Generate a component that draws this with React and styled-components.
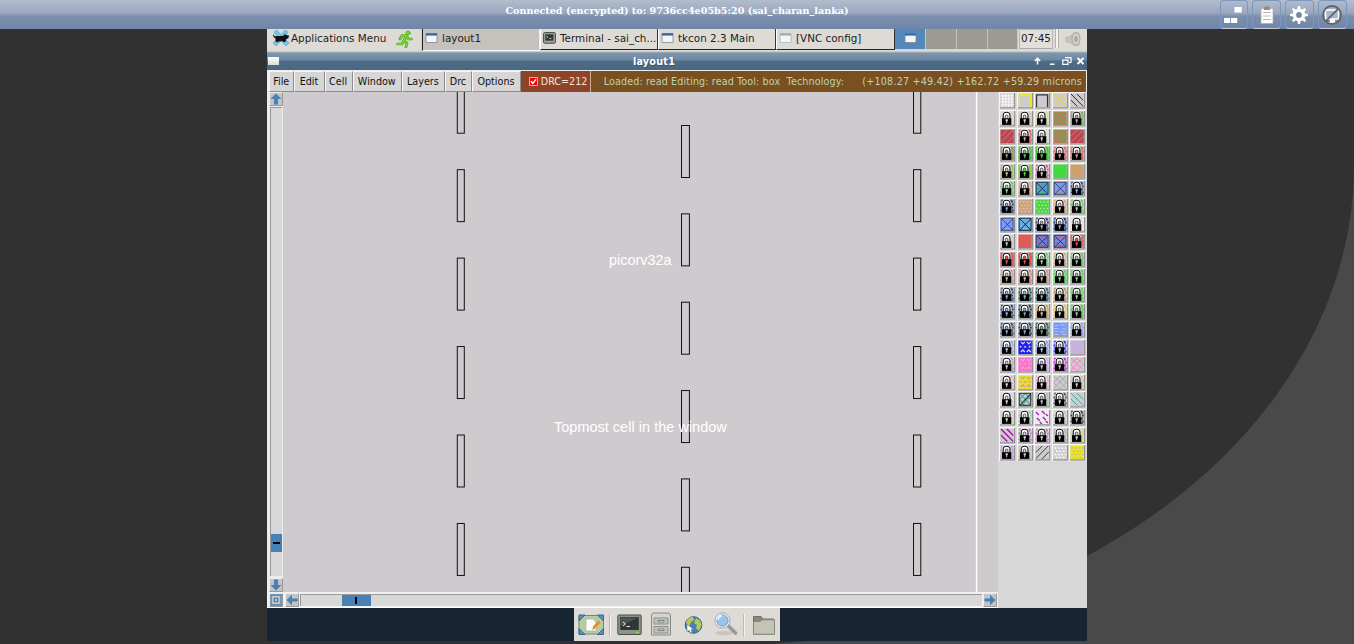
import React from "react";
import styled, { createGlobalStyle } from "styled-components";

const Global = createGlobalStyle`
  * { box-sizing: border-box; }
  html, body { margin: 0; height: 100%; overflow: hidden; background: #494949; }
  body { font-family: "DejaVu Sans", sans-serif; font-size: 10.4px; color: #1c1c1c; }
  svg { display: block; flex: none; }
`;

const Page = styled.div`
  width: 1354px; height: 644px; display: flex; flex-direction: column; overflow: hidden; background: #494949;
`;
const Banner = styled.header`
  height: 28.8px; flex: none; display: grid; grid-template-columns: 1fr auto 1fr; align-items: start;
  background: linear-gradient(#b2bdcd 0%, #99a7be 45%, #7b8fae 56%, #7086a8 100%);
`;
const BannerText = styled.div`
  grid-column: 2; padding-top: 4px; color: #fff; white-space: pre;
  font: bold 9.6px/13px "DejaVu Serif", serif;
`;
const BannerButtons = styled.div`
  display: flex; justify-content: flex-end; gap: 4px; padding-right: 7.5px;
`;
const BannerButton = styled.div`
  width: 28.7px; height: 28.8px; border: 1px solid #7d97c0; border-radius: 4px; border-bottom-color: #c4cdda;
  display: flex; align-items: center; justify-content: center; padding-top: 1px;
`;
const Screen = styled.main`
  width: 1354px; height: 617px; flex: none; background: #313131; border-bottom-right-radius: 640px 480px;
  display: flex; justify-content: center; align-items: flex-start;
`;
const Desktop = styled.div`
  width: 820px; height: 612.2px; background: #172434; display: flex; flex-direction: column; align-items: center;
`;

const Panel = styled.div`
  width: 100%; height: 22.2px; flex: none; display: flex; background: #dedbd6; white-space: pre; line-height: 18px;
`;
const AppMenu = styled.div`
  width: 129px; display: flex; align-items: center; gap: 1px; padding-left: 5px; height: 19px;
`;
const Runner = styled.div`width: 26px; padding-top: 1px; border-right: 1px solid #cfccc7;`;
const Task = styled.div`
  width: ${(p) => p.$w}px; height: ${(p) => (p.$active ? 22 : 21)}px; display: flex; align-items: center; gap: 4px; padding: 0 0 2px 2px;
  background: ${(p) => (p.$active ? "#c5c1bc" : "#dedbd6")};
  border-left: 1px solid ${(p) => (p.$active ? "#222" : "#fff")};
  border-bottom: 1px solid ${(p) => (p.$active ? "#f8f8f8" : "#222")};
  border-right: 1px solid ${(p) => (p.$active ? "#eee" : "#333")};
`;
const Workspace = styled.div`
  width: ${(p) => p.$w}px; height: 21px; display: flex; align-items: center; justify-content: center; padding-bottom: 2px;
  background: ${(p) => (p.$on ? "#5588ba" : "#9c9a93")}; border-right: 1px solid #c9c6c1; border-bottom: 1px solid #d7d4cf;
`;
const Clock = styled.div`
  width: 34px; height: 20px; margin-left: 1px; padding-left: 1px; border: 1px solid #bbb8b3; border-bottom-color: #aaa;
  line-height: 17px; background: #e2dfda;
`;
const Grip = styled.div`width: 4px; height: 19px; margin-left: 2px; border: solid #b5b2ad; border-width: 0 1px; background: #f4f2ef;`;
const Tray = styled.div`flex: 1; display: flex; justify-content: flex-end; padding: 1px 5px 0 0;`;

const TitleBar = styled.div`
  width: 100%; height: 18.6px; flex: none; display: grid; grid-template-columns: 1fr auto 1fr; align-items: center;
  background: linear-gradient(#dcdcd8 0, #7f96ae 2px, #6d87a2 9px, #4e6d88 10px, #496781 100%);
  color: #fff;
`;
const TitleMark = styled.div`width: 11px; height: 8px; margin: 2px 0 0 1px; background: linear-gradient(#fff, #dcdcd6);`;
const Title = styled.div`
  font: bold 9.7px/14px "DejaVu Sans", sans-serif; letter-spacing: 0.2px; text-shadow: 1px 1px 0 #3a536b;
  padding-top: 3px; margin-right: 46px;
`;
const TitleActions = styled.div`display: flex; justify-content: flex-end; padding: 2px 2.5px 0 0;`;

const MenuBar = styled.div`
  width: 100%; height: 22.4px; flex: none; display: flex; padding: 1px 1px 0 2px; background: #ededed;
  font-size: 9.6px; line-height: 21px; white-space: pre;
`;
const MenuItem = styled.div`
  width: ${(p) => p.$w}px; height: 21px; text-align: center; background: #d6d6d6; color: #111;
  border: 1px solid #f5f5f5; border-right: 1.5px solid #8d8d8d; border-bottom-color: #8d8d8d; line-height: 19.5px;
  text-indent: -1px;
`;
const Drc = styled.div`
  width: 70px; display: flex; align-items: center; gap: 3px; padding-left: 8px; background: #8d4429; color: #f0e4da;
  border-right: 1px solid #c9b19c;
`;
const Status = styled.div`
  flex: 1; display: flex; justify-content: space-between; padding: 0 4px 0 13px; background: #7a5020; color: #bfd0b2;
`;
const StatusText = styled.span`letter-spacing: ${(p) => p.$track}px;`;

const Body = styled.div`width: 100%; height: 516px; flex: none; display: flex; background: #d7d7d7;`;
const Editor = styled.div`width: 731px; display: flex; flex-direction: column;`;
const EditorTop = styled.div`height: 500px; display: flex;`;
const VScroll = styled.div`
  width: 16px; display: flex; flex-direction: column; align-items: center; padding: 0.5px 0 0 2px; background: #ececec;
`;
const HScroll = styled.div`
  height: 16px; display: flex; align-items: center; padding: 1px 0 0 1.5px; background: #f1f1f1; border-bottom: 1px solid #fff;
`;
const Arrow = styled.div`
  width: 14px; height: 14px; flex: none; background: #c4c4c4; border: 1px solid #ededed;
  border-right-color: #999; border-bottom-color: #999; margin: ${(p) => p.$m || "0"};
`;
const VTrough = styled.div`
  width: 12px; flex: 1; margin-top: 1px; background: #d8d8d8; border: solid #999; border-width: 1px 0 0 1px; padding-top: 425.5px;
  margin-bottom: 2px;
`;
const VThumb = styled.div`
  height: 18px; background: #4682b4; display: flex; align-items: center; justify-content: center;
`;
const HTrough = styled.div`
  height: 12.6px; flex: 1; background: #d8d8d8; border: solid #999; border-width: 1px 0 0 1px; padding-left: 41px;
  margin-right: 1px;
`;
const HThumb = styled.div`
  width: 29px; height: 11px; background: #4682b4; display: flex; align-items: center; justify-content: center;
`;
const ThumbMark = styled.i`background: #000; width: ${(p) => p.$w}px; height: ${(p) => p.$h}px;`;
const Palette = styled.div`
  width: 89px; padding: 0.4px 0 0 1px; display: grid; grid-template-columns: repeat(5, 17.6px); grid-auto-rows: 17.6px; align-content: start;
  background: #d7d7d7;
`;
const Dock = styled.div`
  width: 206px; height: 33px; background: #dedbd6; display: flex; align-items: center; padding: 1px 0 0 4px;
`;
const DockIcon = styled.div`width: 26px; margin-left: ${(p) => p.$gap}px; display: flex; justify-content: center;`;
const DockLine = styled.i`width: 2px; height: 22px; margin-left: ${(p) => p.$gap}px; background: #bdb9b4; border-right: 1px solid #f5f3ef;`;

const BG = "#cfcace";
const N = "none";
/* Each entry is [kind, base colour, ink colour]; the kind "lock" is a locked layer over a speckled fill. */
const L = (base, ink = base) => ["lock", base, ink];
const tan = "#cda17c", grn = "#42d83e", red = "#df5b5b", blu = "#7899ff", pink = "#ff6fd0", lav = "#c3afdc";
const layers = [
  ["grid", BG, "#fff"], ["frame", BG, "#f3ee10"], ["frame", BG, "#333"], ["back", BG, "#ddd94b"], ["back", BG, "#222"],
  L("#ddd", "#e7c9b0"), L("#d8d0cf", "#d9bda9"), L("#ddd", "#dfdf62"), ["back", "#b17e60", "#70a845"], L("#c2aaa0", "#56bd54"),
  ["slash", "#bd4450", "#d0807a"], L("#d8aaaa", "#dc555b"), L("#ddd", "#ddd"), ["cross", "#b17e60", "#70a845"], ["slash", "#bd4450", "#d0807a"],
  L("#a69a79", "#62a744"), L("#69c662", "#27d62b"), L("#55d64e", "#45ae40"), L("#dfa5aa", "#cf5965"), L("#e39d8a", "#cf5945"),
  L("#d5c3a2", "#6ccb42"), L("#58da45", "#c0c638"), L("#dfcad0", "#b94a7d"), ["solid", grn, grn], ["solid", "#cda170", "#cda170"],
  L("#a9d3a6", "#57cf53"), L("#ddc9b8", tan), ["box", "#5a94e0", "#35c94c", "#1d3442"], ["box", blu, "#b89988", "#344057"], L("#9db6f2", "#263353"),
  L("#8da6d3", "#202d49"), ["dots", tan, "#d5c5b8"], ["dots", grn, "#b9d8b2"], L("#e0caba", "#d0a174"), L("#bbdbb8", "#33d62d"),
  ["box", blu, "#9faac3", "#2f4569"], ["box", "#70a8ee", "#65cfaa", "#10171c"], L("#a9b4d3", "#1c263c"), L("#8faaea", "#172034"), L("#eee", "#ddd"),
  L("#d0d0d0", "#d0d0d0"), ["solid", red, red], ["box", "#6384dc", "#d9485e", "#303052"], ["box", "#6e8de8", "#dc4a4c", "#303248"], L(red, "#df8a83"),
  L(red, "#ed5553"), L(red, "#ed4440"), L("#b1dbad", "#51ca4e"), L("#e1cfc2", tan), L("#a6d2a1", "#4fc44b"),
  L("#d6c1b0", "#c49b77"), L("#dfb8b8", "#da7373"), L("#d0bcac", "#b99a80"), L("#91dd8b", "#4bcf47"), L("#9bd897", "#46c842"),
  L("#9daed4", "#27395d"), L("#93bab2", "#173a34"), L("#99b2be", "#1e4c46"), L("#dfcfc2", "#a98059"), L("#a0dc9b", "#4bcc47"),
  L("#93b1e8", "#1b2842"), L("#7fa0b8", "#122b2a"), L("#d6c3a8", "#cf9d43"), L("#e7dcb8", "#e1ba51"), L("#99d795", "#40c33c"),
  L("#92a8cc", "#263955"), L("#92a8c7", "#172438"), L("#83a598", "#234742"), ["wave", blu, "#b9c3e0"], L("#b9c7e8", blu),
  L("#c5d0ea", "#7fa1ee"), ["weave", "#1d1def", "#d8d4f6"], L("#bacbf0", "#7396ee"), L("#bfc3ff", "#1515eb"), ["solid", "#c6b2dd", lav],
  L("#d8cdd9", "#b698ac"), ["weave", pink, "#d9b0c8"], L("#d4c7e2", lav), L("#e0b6ea", "#aa17c7"), ["cross", BG, "#ff75cb"],
  L("#e5d7da", "#e9a4b6"), ["weave", "#e8df2f", "#d794b0"], L("#e7d7dc", "#e4a3bc"), ["cross", BG, "#a8a8a8"], L("#d9d3cf", "#d7b69c"),
  L("#ddd", "#d4d4d4"), ["xframe", BG, "#47aaa4"], L("#c8c8c8", "#b2b2b2"), L("#d1d1d1", "#333"), ["back", BG, "#36aaa2"],
  L("#ddd9d6", "#dec5af"), L("#dedede", "#6ec8bd"), ["dash", "#f2edf2", "#aa25bb"], L("#ddd", "#bbb"), L("#bbb", "#222"),
  ["bold", BG, "#b314c2"], L("#ddd2df", "#b85bbe"), L("#ddd2df", "#b85bbe"), L("#ccc", "#aaa"), L("#d7d6cd", "#dfdd45"),
  L("#d1bddd", "#b898de"), L("#d3cfd3", "#bbb"), ["slash", BG, "#333"], ["dots", "#cfcccf", "#fff"], ["dots", "#ece61c", "#c0bcae"],
];

const SPECKS = [[3, 2], [13, 3], [2, 6], [14, 6], [3, 9], [13, 9], [2, 12], [14, 12], [13, 14], [12, 2]];

function Swatch({ kind, base, ink, line }) {
  const lines = {
    back: "M2 2 14.5 14.5M8 2 14.5 8.5M2 8 8.5 14.5",
    bold: "M2 2 14.5 14.5M8 2 14.5 8.5M2 8 8.5 14.5",
    slash: "M2 14.5 14.5 2M8 15 15 8M2 8.5 8.5 2",
    cross: "M2 9 8 15M2 2 14 14M8 2 15 9M2 8 8 2M2 14 14 2M8 15 15 8",
    dash: "M2 3l3 3M8 2l3 3M12 5l2 2M3 9l3 3M9 8l3 3M6 13l2 2M12 12l2 2",
    wave: "M3 4.5h3M8 4h5M2 7.5h5M10 8h4M3 10.5h3M8 11h5M2 13.5h5M10 13.5h4",
    weave: "M4 3l2 2 2-2M10 3l2 2 2-2M3 7l1.5 1.5M7 8h2.5M12 8.5 13.5 7M4 13l2-2 2 2M10 13l2-2 2 2",
  };
  const widths = { bold: 1.5, dash: 1.5, weave: 1.3, wave: 1 };
  return (
    <svg width="17.6" height="17.6" viewBox="0 0 17.6 17.6">
      <path d="M0 0H17.6V17.6H0z" fill="#dcdcdc" />
      <path d="M.4 17V.6H16.5" fill={N} stroke="#f7f7f7" strokeWidth="1.3" />
      <path d="M1 15.9H15.6V1" fill={N} stroke="#929292" strokeWidth="1.2" />
      <svg x="1.4" y="1.4" width="13.4" height="13.6" viewBox="1.5 1.5 13.5 13.5" preserveAspectRatio="none">
        <path d="M1 1H16V16H1z" fill={base} />
        {lines[kind] && <path d={lines[kind]} fill={N} stroke={ink} strokeWidth={widths[kind] || 0.95} />}
        {kind === "grid" && <path d="M2 4H15M2 7H15M2 10H15M2 13H15M4 2V15M7 2V15M10 2V15M13 2V15" stroke={ink} strokeWidth=".9" />}
        {kind === "frame" && <path d="M2.6 15V3H13.8V15" fill={N} stroke={ink} strokeWidth="1.4" />}
        {kind === "dots" && <path d="M2.5 4H15M4 7.3H15M2.5 10.6H15M4 13.6H15" stroke={ink} strokeWidth="1.5" strokeDasharray="1.8 1.7" />}
        {kind === "xframe" && <path d="M2 9 9 2M5 14 14 5M3 3 14 14M8 2 15 9M2 8 8 15" fill={N} stroke={ink} strokeWidth="1.2" />}
        {kind === "xframe" && <path d="M2.3 2.3H14V14.3H2.3zM3 14 14 3" fill={N} stroke="#222" strokeWidth="1" />}
        {kind === "box" && <path d="M5 3h7M3 6h3M11 6h3M4 10h2M11 10h3M6 13h5" stroke={ink} strokeWidth="1.3" />}
        {kind === "box" && <path d="M2.2 2.3H14.3V14.3H2.2zM3 3 14 14M14 3 3 14" fill={N} stroke={line} strokeWidth="0.9" />}
        {kind === "lock" && SPECKS.map(([x, y]) => <path key={`${x}-${y}`} d={`M${x - 0.5} ${y - 0.5}h1.4v2h-1.4z`} fill={ink} />)}
      </svg>
      {kind === "lock" && (
        <g>
          <path d="M3.6 8V5.1Q3.6 1.7 7.6 1.7T11.6 5.1V8" fill={N} stroke="#f4f4f4" strokeWidth="1.2" />
          <path d="M4.2 8.6V5.3Q4.2 2.3 7.6 2.3T11 5.3V8.6" fill="#fff" stroke="#111" strokeWidth="1.15" />
          <path d="M6.3 8.6V6.2Q6.3 5 7.6 5T8.9 6.2V8.6" fill={base} stroke="#222" strokeWidth=".7" />
          <path d="M3 8.2H12.3V14.9H3z" fill="#000" />
          <path d="M6.6 9.2H8.8V11.3H8.2V13.2H7.2V11.3H6.6z" fill={base} />
        </g>
      )}
    </svg>
  );
}

const WindowIcon = ({ pale }) => (
  <svg width="13" height="12" viewBox="0 0 13 12">
    <path d="M1 1.5H12V10.5H1z" fill="#f5f5f2" stroke={pale ? "#aab3bd" : "#7c8797"} strokeWidth=".8" />
    <path d="M1 1.2H12V3.6H1z" fill={pale ? "#9aafc8" : "#3c67a8"} />
  </svg>
);
const TerminalMini = () => (
  <svg width="13" height="12" viewBox="0 0 13 12">
    <rect x=".6" y=".6" width="11.8" height="10.6" rx="1" fill="#a3a8a2" stroke="#454a46" />
    <path d="M2.3 2.3H10.5V8.7H2.3z" fill="#303934" />
    <path d="M3.5 4 5 5 3.5 6M6 6.5H8.5" stroke="#b8c5bb" fill={N} strokeWidth=".8" />
  </svg>
);
const ARROWS = {
  up: "M6 .5 11.5 6H8V11.5H4V6H.5z",
  down: "M6 11.5 .5 6H4V.5H8V6H11.5z",
  left: "M.5 6 6 .8V4.6H11.5V7.4H6V11.2z",
  right: "M11.5 6 6 .8V4.6H.5V7.4H6V11.2z",
};
const ArrowGlyph = ({ dir }) => (
  <svg width="12" height="12" viewBox="0 0 12 12"><path d={ARROWS[dir]} fill="#4682b4" /></svg>
);

const cellRects = [];
for (let i = 0; i < 6; i++) {
  cellRects.push([174.4, -10.8 + i * 88.45, 7], [630.6, -10.8 + i * 88.45, 7.3], [398.6, 33.5 + i * 88.35, 7.9]);
}

function LayoutCanvas() {
  return (
    <svg width="715" height="500" viewBox="0 0 715 500">
      <path d="M0 0H715V500H0z" fill="#cfcace" />
      {cellRects.map(([x, y, w], i) => (
        <rect key={i} x={x - 0.1} y={y} width={w} height="52" fill={N} stroke="#111" strokeWidth="1" />
      ))}
      <path d="M693.6 0V500" stroke="#fff" strokeWidth="1.5" />
      <g fill="#fff" fontFamily="'Liberation Sans', sans-serif" fontSize="14.4">
        <text x="326" y="173">picorv32a</text>
        <text x="271" y="340" letterSpacing="0.06">Topmost cell in the window</text>
      </g>
    </svg>
  );
}

const menus = [["File", 25.4], ["Edit", 30.2], ["Cell", 28], ["Window", 49.4], ["Layers", 42.8], ["Drc", 27.4], ["Options", 48.6]];

export default function App() {
  return (
    <>
      <Global />
      <Page>
        <Banner>
          <BannerText>Connected (encrypted) to: 9736cc4e05b5:20 (sai_charan_lanka)</BannerText>
          <BannerButtons>
            <BannerButton>
              <svg width="20" height="20" viewBox="0 0 20 20" fill="#fff"><path d="M10.4 2.1h7.4v5.4h-7.4zM0 12.9h6.2v5.2H0zM7 12.9h6.2v5.2H7z" /></svg>
            </BannerButton>
            <BannerButton>
              <svg width="20" height="20" viewBox="0 0 20 20">
                <path d="M4 3.5H16V18.5H4z" fill="#fff" stroke="#aaa" strokeWidth=".7" />
                <path d="M7 2H8.5L10 .6 11.5 2H13V5H7z" fill="#8d8d8d" />
                <path d="M6 8l1-1 1 1 1-1 1 1 1-1 1 1 1-1 1 1M6 11.5l1-1 1 1 1-1 1 1 1-1 1 1 1-1 1 1M6 15l1-1 1 1 1-1 1 1 1-1 1 1 1-1 1 1" fill={N} stroke="#999" strokeWidth=".7" />
              </svg>
            </BannerButton>
            <BannerButton>
              <svg width="20" height="20" viewBox="0 0 20 20">
                <g fill="#fff">
                  {[0, 45, 90, 135].map((a) => <path key={a} d="M8.4 4 9 1h2l.6 3v12L11 19H9L8.4 16z" transform={`rotate(${a} 10 10)`} />)}
                  <circle cx="10" cy="10" r="6.2" />
                </g>
                <circle cx="10" cy="10" r="2.9" fill="#7389aa" />
              </svg>
            </BannerButton>
            <BannerButton>
              <svg width="22" height="22" viewBox="0 0 22 22">
                <path d="M4.5 6H17.5V15H4.5z" fill="#a8b5c9" stroke="#fff" strokeWidth="1.5" />
                <path d="M9 15.5H14V18H16V19H7V18H9z" fill="#fff" />
                <circle cx="11" cy="11" r="9" fill={N} stroke="#61656b" strokeWidth="1.8" />
                <path d="M4.6 17.4 17.4 4.6" stroke="#61656b" strokeWidth="1.8" />
              </svg>
            </BannerButton>
          </BannerButtons>
        </Banner>
        <Screen>
          <Desktop>
            <Panel>
              <AppMenu>
                <svg width="18" height="18" viewBox="0 0 18 18">
                  <path d="M2 3 5 1 9 6 13 1 16 3 12 9 17 14 14 17 9 12 4 17 1 14 6 9z" fill="#78c3e8" stroke="#4aa2d2" strokeWidth=".6" />
                  <path d="M1 5 3 7.5 5 7H11L13 5 14 6 17 6.5 16.5 9 14 10.5 13.5 13H11.5L10 12 7 12.6 4.5 13.5 3.5 12 3.5 9.5 1.5 8z" fill="#111" />
                </svg>
                Applications Menu
              </AppMenu>
              <Runner>
                <svg width="17" height="18" viewBox="0 0 17 18" fill={N} stroke="#4aa51b" strokeLinecap="round" strokeLinejoin="round">
                  <path d="M10 5.5 8 10.5 11 13 10 17M8 10.5 6 14H1.5M10 5.5 6 5.5 4 9M10.5 6 12.5 9H15.5" strokeWidth="2.7" />
                  <circle cx="12" cy="3" r="2.1" fill="#7fdc35" strokeWidth=".8" />
                  <path d="M10 5.5 8 10.5 11 13 10 17M8 10.5 6 14H1.5M10 5.5 6 5.5 4 9M10.5 6 12.5 9H15.5" stroke="#7fdc35" strokeWidth="1.3" />
                </svg>
              </Runner>
              <Task $w={118} $active><WindowIcon />layout1</Task>
              <Task $w={118}><TerminalMini />Terminal - sai_ch...</Task>
              <Task $w={118}><WindowIcon />tkcon 2.3 Main</Task>
              <Task $w={119}><WindowIcon pale />[VNC config]</Task>
              <Workspace $w={31} $on><WindowIcon /></Workspace>
              <Workspace $w={31} /><Workspace $w={31} /><Workspace $w={30} />
              <Clock>07:45</Clock>
              <Grip />
              <Tray>
                <svg width="18" height="18" viewBox="0 0 18 18">
                  <path d="M2 7H5L11 2 15 3V15L11 16 5 12H2z" fill="#c7c4c0" stroke="#b3b0ac" strokeWidth=".7" />
                  <ellipse cx="12" cy="9" rx="4" ry="6" fill="#d5d2ce" stroke="#aaa7a2" />
                  <ellipse cx="12" cy="9" rx="1.8" ry="3" fill="#aaa7a2" />
                </svg>
              </Tray>
            </Panel>
            <TitleBar>
              <TitleMark />
              <Title>layout1</Title>
              <TitleActions>
                <svg width="52" height="12" viewBox="0 0 52 12" fill={N} stroke="#fff" strokeWidth="1.5">
                  <path d="M4.5 9.5V4M1.8 6 4.5 3.3 7.2 6M17 9.3H21.5" />
                  <path d="M32 2.7H38V7.5H36M29.8 5.2H35V9.3H29.8z" strokeWidth="1.2" />
                  <path d="M44.5 3 50.5 9M50.5 3 44.5 9" strokeWidth="1.9" />
                </svg>
              </TitleActions>
            </TitleBar>
            <MenuBar>
              {menus.map(([label, w]) => <MenuItem key={label} $w={w}>{label}</MenuItem>)}
              <Drc>
                <svg width="9" height="9" viewBox="0 0 9 9"><path d="M.5 .5H8.5V8.5H.5z" fill="#f00" stroke="#e8b0a0" /><path d="M2 4.2 3.8 6.4 7 2.4" fill={N} stroke="#fff" strokeWidth="1.5" /></svg>
                DRC=212
              </Drc>
              <Status>
                <StatusText $track={0.11}>Loaded: read Editing: read Tool: box  Technology:</StatusText>
                <StatusText $track={0.2}>(+108.27 +49.42) +162.72 +59.29 microns</StatusText>
              </Status>
            </MenuBar>
            <Body>
              <Editor>
                <EditorTop>
                  <VScroll>
                    <Arrow><ArrowGlyph dir="up" /></Arrow>
                    <VTrough><VThumb><ThumbMark $w={7} $h={1.6} /></VThumb></VTrough>
                    <Arrow><ArrowGlyph dir="down" /></Arrow>
                  </VScroll>
                  <LayoutCanvas />
                </EditorTop>
                <HScroll>
                  <Arrow $m="0 2px 0 0">
                    <svg width="12" height="12" viewBox="0 0 12 12" fill={N} stroke="#4682b4" strokeWidth="1.3"><path d="M1 1H11V11H1zM4.3 4.3H7.7V7.7H4.3z" /></svg>
                  </Arrow>
                  <Arrow $m="0 1px 0 0"><ArrowGlyph dir="left" /></Arrow>
                  <HTrough><HThumb><ThumbMark $w={1.8} $h={7} /></HThumb></HTrough>
                  <Arrow $m="0 1px 0 0"><ArrowGlyph dir="right" /></Arrow>
                </HScroll>
              </Editor>
              <Palette>
                {layers.map(([kind, base, ink, line], i) => <Swatch key={i} kind={kind} base={base} ink={ink} line={line} />)}
              </Palette>
            </Body>
            <Dock>
              <DockIcon $gap={0}>
                <svg width="27" height="24" viewBox="0 0 27 24">
                  <rect x="1" y="2.5" width="24.5" height="18.5" rx="1" fill="#b5cda0" stroke="#738a66" />
                  <path d="M1 2H7L1 8zM25.5 2H19.5L25.5 8zM1 21.5H7L1 15.5zM25.5 21.5H19.5L25.5 15.5z" fill="#5c8dc5" stroke="#37669c" />
                  <path d="M8 6H15L18 9V18H8z" fill="#fafafa" stroke="#a5a5a5" strokeWidth=".6" />
                  <path d="M15.5 15 21.5 8.5" stroke="#ef8b1c" strokeWidth="2.7" /><path d="M14.6 16.5 16 14.8" stroke="#9b5c1d" />
                </svg>
              </DockIcon>
              <DockLine $gap={5} />
              <DockIcon $gap={5}>
                <svg width="25" height="24" viewBox="0 0 25 24">
                  <rect x=".8" y="2" width="23.4" height="19.5" rx="1" fill="#8d928a" stroke="#4c504a" />
                  <path d="M3.2 4H21.8V17H3.2z" fill="#2d3836" /><path d="M4 4.5H21L4 13z" fill="#4c5653" />
                  <path d="M6 9 8.5 11 6 13M9.5 13.5H13" fill={N} stroke="#eee" /><path d="M19 19.5H22" stroke="#8be336" strokeWidth="1.3" />
                </svg>
              </DockIcon>
              <DockIcon $gap={6}>
                <svg width="22" height="25" viewBox="0 0 22 25">
                  <path d="M3 1H19L20.5 3V23H1.5V3z" fill="#d3d5cf" stroke="#898b86" />
                  <path d="M4 6H18V12H4zM4 14.5H18V21H4z" fill="#bfc2bc" stroke="#8d908a" />
                  <path d="M8 8.5H14V10H8zM8 17H14V18.5H8z" fill="#fff" stroke="#656863" strokeWidth=".8" />
                </svg>
              </DockIcon>
              <DockIcon $gap={6}>
                <svg width="21" height="22" viewBox="0 0 21 22">
                  <circle cx="10.5" cy="11" r="8.3" fill="#4380bd" stroke="#315c93" />
                  <path d="M3 8Q5 3 10 3L11 6 8 8 7 11 4 11zM13 4Q18 6 18.6 11L16 17 13 14 14 11 11 9z" fill="#b9c94f" />
                  <path d="M4 10V18L6.2 16.3 7.5 19 9.2 18.2 8 15.6H10.4z" fill="#fff" stroke="#777" strokeWidth=".6" />
                </svg>
              </DockIcon>
              <DockIcon $gap={6}>
                <svg width="25" height="25" viewBox="0 0 25 25">
                  <ellipse cx="11" cy="21" rx="9" ry="2" fill="#c8c5c0" />
                  <path d="M15.5 14 22.5 21" stroke="#999" strokeWidth="3.6" strokeLinecap="round" />
                  <circle cx="9.5" cy="8.5" r="7.6" fill="#f0f3f6" stroke="#a3aab4" /><circle cx="9.5" cy="8.5" r="5.6" fill="#9fc2ea" stroke="#6f9bce" />
                  <path d="M5 8Q5 4 9 4" fill={N} stroke="#e8f2ff" strokeWidth="1.8" />
                </svg>
              </DockIcon>
              <DockLine $gap={5} />
              <DockIcon $gap={6}>
                <svg width="24" height="24" viewBox="0 0 24 24">
                  <path d="M1.5 21V3.5H9L11 6H22V21z" fill="#858a7a" stroke="#6e7266" />
                  <path d="M1.5 8.5H8L10.5 6.8H22.5V21.3H1.5z" fill="#c3c4b4" stroke="#85887a" />
                </svg>
              </DockIcon>
            </Dock>
          </Desktop>
        </Screen>
      </Page>
    </>
  );
}
